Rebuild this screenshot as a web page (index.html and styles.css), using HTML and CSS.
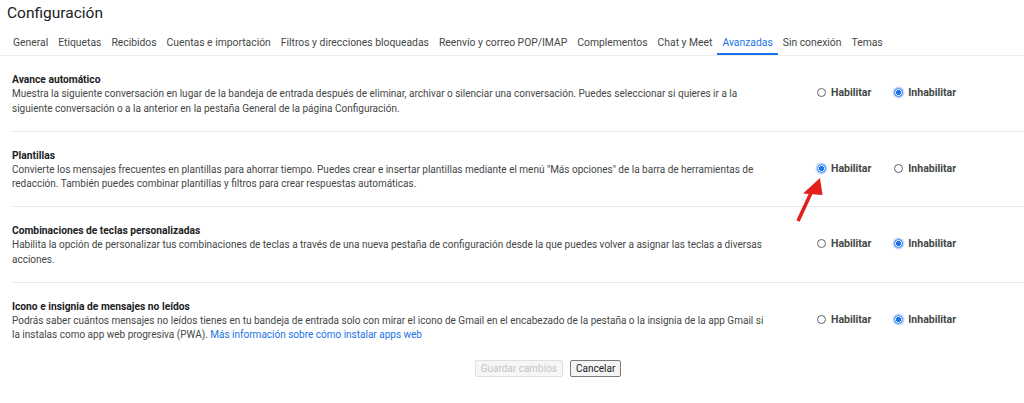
FILE: index.html
```html
<!DOCTYPE html>
<html lang="es">
<head>
  <meta charset="UTF-8" />
  <meta name="viewport" content="width=device-width, initial-scale=1" />
  <title>Configuración - Avanzadas</title>
  <link rel="stylesheet" href="styles.css">
</head>
<body>
  <div class="settings">
    <h1 class="page-title">Configuración</h1>

    <nav class="tabs">
      <a class="tab">General</a>
      <a class="tab">Etiquetas</a>
      <a class="tab">Recibidos</a>
      <a class="tab">Cuentas e importación</a>
      <a class="tab">Filtros y direcciones bloqueadas</a>
      <a class="tab">Reenvío y correo POP/IMAP</a>
      <a class="tab">Complementos</a>
      <a class="tab">Chat y Meet</a>
      <a class="tab active">Avanzadas</a>
      <a class="tab">Sin conexión</a>
      <a class="tab">Temas</a>
    </nav>

    <div class="section">
      <div class="info">
        <div class="name">Avance automático</div>
        <div class="desc">Muestra la siguiente conversación en lugar de la bandeja de entrada después de eliminar, archivar o silenciar una conversación. Puedes seleccionar si quieres ir a la siguiente conversación o a la anterior en la pestaña General de la página Configuración.</div>
      </div>
      <div class="options">
        <label class="opt"><input type="radio" name="avance" /> Habilitar</label>
        <label class="opt"><input type="radio" name="avance" checked /> Inhabilitar</label>
      </div>
    </div>

    <div class="section">
      <div class="info">
        <div class="name">Plantillas</div>
        <div class="desc">Convierte los mensajes frecuentes en plantillas para ahorrar tiempo. Puedes crear e insertar plantillas mediante el menú "Más opciones" de la barra de herramientas de redacción. También puedes combinar plantillas y filtros para crear respuestas automáticas.</div>
      </div>
      <div class="options">
        <label class="opt"><input type="radio" name="plantillas" checked /> Habilitar</label>
        <label class="opt"><input type="radio" name="plantillas" /> Inhabilitar</label>
      </div>
      <svg class="pointer" width="34" height="50" viewBox="0 0 34 50">
        <line x1="4" y1="46" x2="17" y2="18" stroke="#e3211c" stroke-width="3.6" />
        <polygon points="26,3 9,18.5 28.5,20" fill="#e3211c" />
      </svg>
    </div>

    <div class="section">
      <div class="info">
        <div class="name">Combinaciones de teclas personalizadas</div>
        <div class="desc">Habilita la opción de personalizar tus combinaciones de teclas a través de una nueva pestaña de configuración desde la que puedes volver a asignar las teclas a diversas acciones.</div>
      </div>
      <div class="options">
        <label class="opt"><input type="radio" name="teclas" /> Habilitar</label>
        <label class="opt"><input type="radio" name="teclas" checked /> Inhabilitar</label>
      </div>
    </div>

    <div class="section last">
      <div class="info">
        <div class="name">Icono e insignia de mensajes no leídos</div>
        <div class="desc">Podrás saber cuántos mensajes no leídos tienes en tu bandeja de entrada solo con mirar el icono de Gmail en el encabezado de la pestaña o la insignia de la app Gmail si la instalas como app web progresiva (PWA). <a class="link">Más información sobre cómo instalar apps web</a></div>
      </div>
      <div class="options">
        <label class="opt"><input type="radio" name="insignia" /> Habilitar</label>
        <label class="opt"><input type="radio" name="insignia" checked /> Inhabilitar</label>
      </div>
    </div>

    <div class="actions">
      <button class="btn" disabled>Guardar cambios</button>
      <button class="btn">Cancelar</button>
    </div>
  </div>
</body>
</html>
```

FILE: styles.css
```css
* {
  box-sizing: border-box;
}

html, body {
  margin: 0;
  padding: 0;
  background: #ffffff;
  font-family: Roboto, "Noto Sans", Arial, sans-serif;
  color: #3c4043;
}

.settings {
  width: 1024px;
}

.page-title {
  margin: 0;
  padding: 2px 0 0 7px;
  height: 30px;
  font-size: 15.5px;
  font-weight: 400;
  color: #202124;
  line-height: 22px;
}

.tabs {
  display: flex;
  padding-left: 8px;
  border-bottom: 1px solid #eeeeee;
  height: 26px;
}

.tab {
  padding: 5px 5px 0;
  font-size: 10.35px;
  line-height: 16px;
  color: #444746;
  border-bottom: 2px solid transparent;
  white-space: nowrap;
}

.tab.active {
  color: #1a73e8;
  border-bottom-color: #1a73e8;
}

.section {
  position: relative;
  display: flex;
  margin-left: 12px;
  padding: 16px 0 14px;
  border-bottom: 1px solid #e8e8e8;
}

.section.last {
  border-bottom: none;
}

.info {
  width: 752px;
  margin-right: 18px;
}

.name {
  font-size: 10.25px;
  font-weight: 700;
  line-height: 15px;
  color: #202124;
}

.desc {
  font-size: 10px;
  line-height: 14.75px;
  color: #444746;
}

.link {
  color: #1a73e8;
}

.options {
  display: flex;
  gap: 23px;
  padding: 13px 0 0 35px;
}

.opt {
  display: flex;
  align-items: flex-start;
  gap: 5px;
  font-size: 10.5px;
  font-weight: 700;
  line-height: 16px;
  color: #444746;
  white-space: nowrap;
}

.opt input {
  appearance: none;
  margin: 3px 0 0;
  width: 9px;
  height: 9px;
  border: 1px solid #5f6368;
  border-radius: 50%;
  background: #fff;
}

.opt input:checked {
  border-color: #1a73e8;
  background: radial-gradient(circle, #1a73e8 0 2.4px, #fff 2.8px);
  box-shadow: 0 0 0 1.5px #c6dafc;
}

.pointer {
  position: absolute;
  left: 782px;
  top: 43px;
}

.actions {
  display: flex;
  justify-content: center;
  gap: 7px;
  padding: 3px 0 0 72px;
}

.btn {
  font-family: Roboto, Arial, sans-serif;
  font-size: 10px;
  height: 17px;
  padding: 0 5px;
  border: 1px solid #7a7a7a;
  border-radius: 2px;
  background: #f4f4f4;
  color: #202124;
}

.btn:disabled {
  border-color: #e0e0e0;
  background: #f6f6f6;
  color: #c4c4c4;
}
```
